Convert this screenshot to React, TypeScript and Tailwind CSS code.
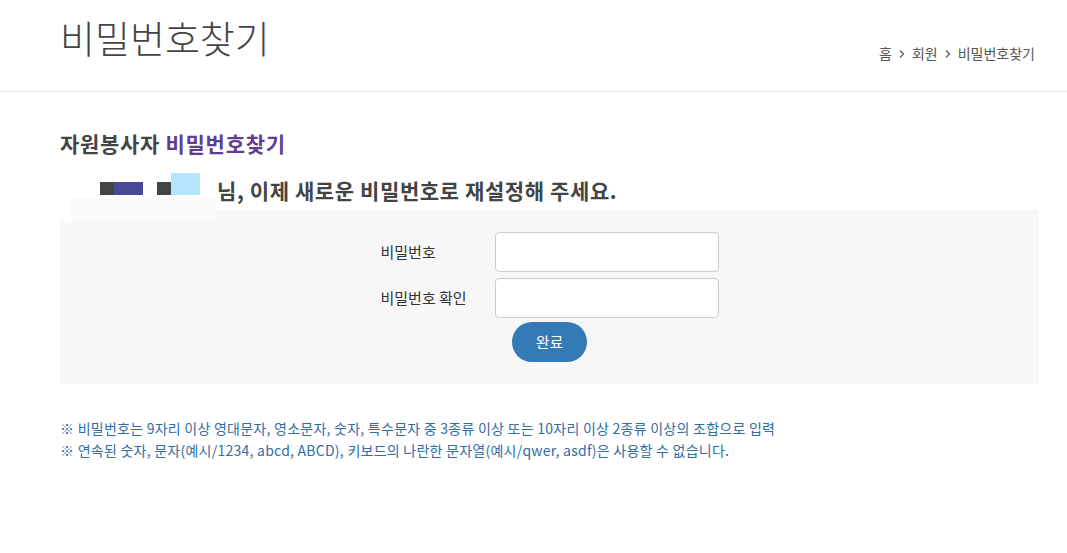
import React from 'react';

const font = { fontFamily: '"Noto Sans CJK KR", "Noto Sans", sans-serif' };

const Chevron = () => (
  <svg width="8" height="10" viewBox="0 0 8 10" className="mx-[6px] text-[#555]" fill="none">
    <path d="M2 1.5 L5.5 5 L2 8.5" stroke="currentColor" strokeWidth="1.2" />
  </svg>
);

export default function App() {
  return (
    <div className="min-h-[553px] bg-white text-[#333]" style={font}>
      <header className="flex h-[92px] items-start justify-between border-b border-[#e5e5e5] pl-[60px] pr-[32px]">
        <h1 className="mt-[10px] text-[38px] font-light leading-[54px] text-[#444]">비밀번호찾기</h1>
        <nav className="mt-[43px] flex items-center text-[14px] text-[#555]">
          <span>홈</span>
          <Chevron />
          <span>회원</span>
          <Chevron />
          <span>비밀번호찾기</span>
        </nav>
      </header>

      <main className="pl-[60px] pr-[28px]">
        <h2 className="mt-[36px] text-[21px] font-bold leading-[30px] tracking-[0.7px] text-[#444]">
          자원봉사자 <span className="text-[#5f3d91]">비밀번호찾기</span>
        </h2>

        <div className="relative flex h-[52px] items-end pb-[4px]">
          <div className="absolute left-[11px] top-[40px] h-[26px] w-[145px] bg-[#fafafa]" />
          <div className="flex items-end pl-[40px]">
            <span className="mb-[11px] h-[13px] w-[14px] bg-[#444]" />
            <span className="mb-[11px] h-[13px] w-[29px] bg-[#4a4896]" />
            <span className="mb-[11px] ml-[14px] h-[13px] w-[14px] bg-[#444]" />
            <span className="mb-[11px] h-[22px] w-[29px] bg-[#b3e5fc]" />
          </div>
          <p className="relative ml-[17px] text-[21px] font-bold leading-[32px] tracking-[0.6px] text-[#444]">
            님, 이제 새로운 비밀번호로 재설정해 주세요.
          </p>
        </div>

        <section className="relative flex h-[174px] flex-col items-center bg-[#f7f7f7] pt-[22px]">
          <div className="absolute left-[11px] top-0 h-[12px] w-[145px] bg-[#fafafa]" />
          <div className="absolute left-0 top-0 h-[12px] w-[11px] bg-white" />
          <div className="flex flex-col gap-[6px]">
            <label className="flex items-center">
              <span className="w-[114px] text-[15px] text-[#333]">비밀번호</span>
              <input type="password" className="h-[40px] w-[224px] rounded-[4px] border border-[#ccc] bg-white outline-none" />
            </label>
            <label className="flex items-center">
              <span className="w-[114px] text-[15px] text-[#333]">비밀번호 확인</span>
              <input type="password" className="h-[40px] w-[224px] rounded-[4px] border border-[#ccc] bg-white outline-none" />
            </label>
          </div>
          <button className="mt-[4px] h-[40px] w-[75px] rounded-full bg-[#337ab7] text-[15px] text-white">
            완료
          </button>
        </section>

        <div className="mt-[33px] text-[14px] leading-[22px] tracking-[0.25px] text-[#2f6da3]">
          <p>※ 비밀번호는 9자리 이상 영대문자, 영소문자, 숫자, 특수문자 중 3종류 이상 또는 10자리 이상 2종류 이상의 조합으로 입력</p>
          <p>※ 연속된 숫자, 문자(예시/1234, abcd, ABCD), 키보드의 나란한 문자열(예시/qwer, asdf)은 사용할 수 없습니다.</p>
        </div>
      </main>
    </div>
  );
}
